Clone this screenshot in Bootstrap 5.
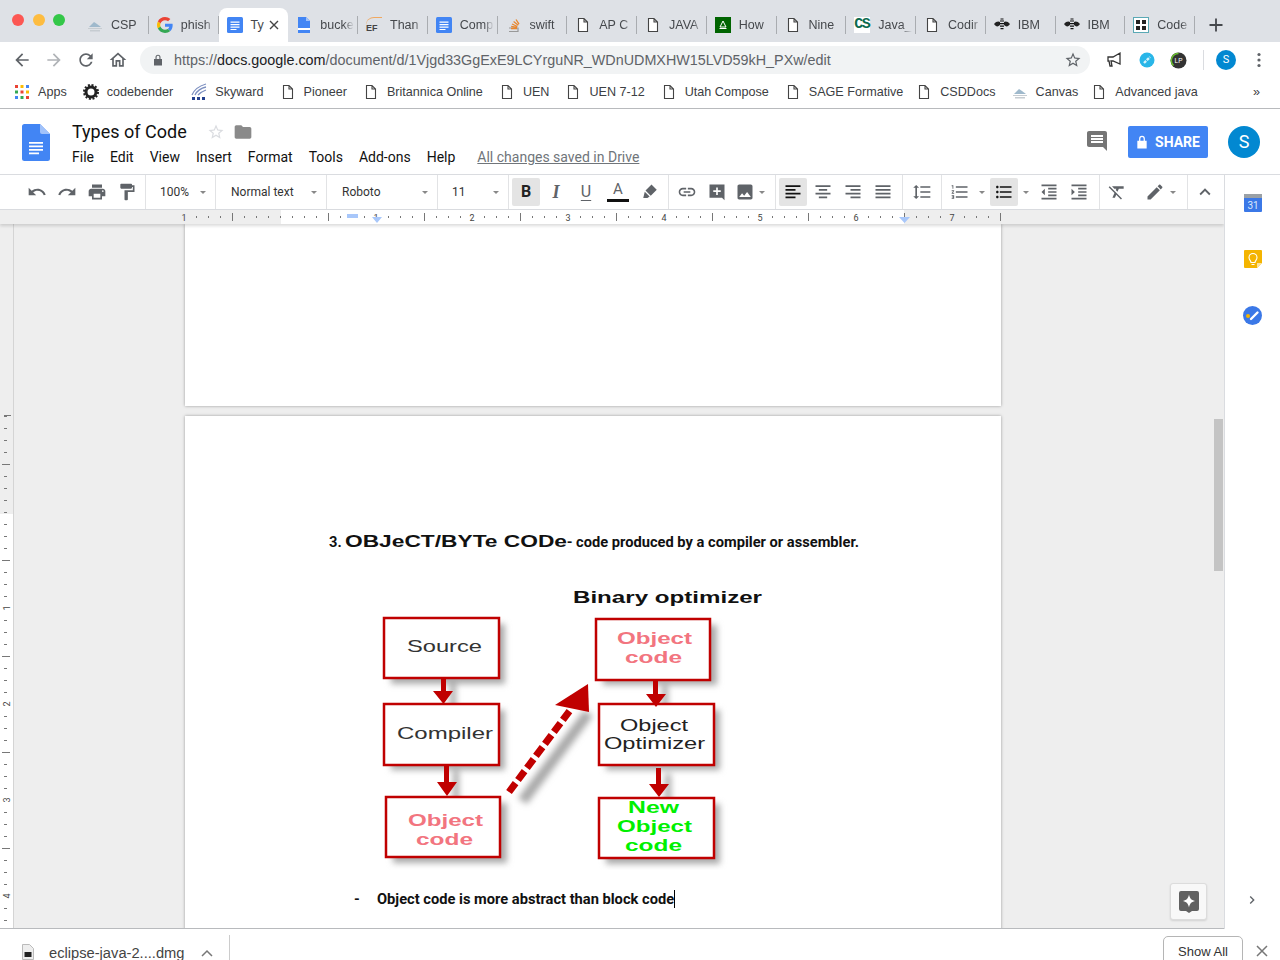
<!DOCTYPE html>
<html lang="en">

<head>
	<meta charset="utf-8">
	<title>Types of Code - Google Docs</title>
	<link href="https://cdn.jsdelivr.net/npm/bootstrap@5.3.3/dist/css/bootstrap.min.css" rel="stylesheet">
	<style>
		html, body { height: 960px; overflow: hidden; }
		body { font-family: Roboto, "Liberation Sans", sans-serif; color: #202124; background: #fff; }
		.app { height: 960px; width: 1280px; overflow: hidden; }
		svg { display: block; flex: none; }
		.ic { fill: #5f6368; }

		/* browser tabs */
		.tabstrip { height: 42px; background: #dee1e6; padding-left: 79px; flex: none; position: relative; }
		.lights { position: absolute; left: 12px; top: 14px; gap: 8.5px; }
		.light { width: 12px; height: 12px; border-radius: 50%; }
		.light-r { background: #fc5753; }
		.light-y { background: #fdbc40; }
		.light-g { background: #33c748; }
		.tabitem { width: 69.75px; height: 34px; margin-top: 8px; padding: 0 0 0 8px; font: 12.5px "Liberation Sans", sans-serif; color: #45484c; position: relative; white-space: nowrap; flex: none; }
		.tabitem::after { content: ""; position: absolute; right: 0; top: 8px; height: 18px; border-right: 1px solid #a9acb0; }
		.tabitem.active { background: #fff; border-radius: 8px 8px 0 0; }
		.tabitem.active::after { display: none; }
		.tablabel { width: 34px; margin-left: 8px; -webkit-mask-image: linear-gradient(90deg, #000 70%, transparent); mask-image: linear-gradient(90deg, #000 70%, transparent); }
		.tablabel-short { margin-left: 8px; width: 14px; }
		.tabx { margin-left: 4px; }
		.fav { width: 16px; height: 16px; flex: none; }
		.fav-ef { font: bold 9px "Liberation Sans", sans-serif; color: #444; line-height: 20px; border-top: 1px solid #f0a860; border-radius: 8px 0 0 0; }
		.fav-cs { font: bold 15px "Liberation Mono", monospace; color: #0c6b4e; line-height: 16px; letter-spacing: -1.500px; background: #fff; }
		.newtab { margin-left: 11px; margin-top: 15px; }

		/* address bar */
		.addrbar { height: 36px; flex: none; padding-left: 12px; }
		.navbtn { width: 32px; }
		.urlpill { width: 950px; height: 28px; margin-left: 12px; background: #f1f3f4; border-radius: 14px; padding: 0 8px 0 13px; font: 14.35px "Liberation Sans", sans-serif; color: #5f6368; }
		.urltext { margin-left: 11px; white-space: nowrap; }
		.urltext b { color: #202124; font-weight: 400; }
		.ext { margin-left: 16px; }
		.ext-gap { margin-left: 15px; }
		.vline { width: 1px; height: 20px; background: #dadce0; margin-left: 16px; }
		.acct { width: 20px; height: 20px; border-radius: 50%; background: #0288d1; color: #fff; font: 11px/20px Roboto, sans-serif; text-align: center; margin-left: 12px; }
		.dots { margin-left: 21px; }

		/* bookmarks */
		.bookbar { height: 31px; flex: none; padding: 0 0 2px 15px; border-bottom: 1px solid #b8babd; font: 12.6px "Liberation Sans", sans-serif; color: #3c4043; white-space: nowrap; }
		.bookitem { gap: 8px; margin-right: 16px; flex: none; }
		.bookitem.first { gap: 9px; }
		.bookitem.shift { margin-left: 2px; }
		.bookitem.tight { margin-right: 13px; }
		.morebooks { right: 20px; }

		/* docs header */
		.dochead { height: 66px; flex: none; padding: 15px 20px 0 22px; border-bottom: 1px solid #dadce0; }
		.docname { margin-left: 22px; margin-top: -2px; }
		.doctitle { font-size: 18px; line-height: 18px; color: #111; }
		.menus { font-size: 14px; line-height: 18px; gap: 16px; margin-top: 6px; color: #111; }
		.saved { color: #70757a; text-decoration: underline; margin-left: 6px; }
		.titlegap { margin-left: 20px; }
		.sharebtn { width: 80px; height: 32px; background: #4285f4; border-radius: 2px; color: #fff; font-size: 14px; font-weight: 700; gap: 7px; margin-left: 20px; margin-top: 2px; }
		.avatar { width: 32px; height: 32px; border-radius: 50%; background: #0288d1; color: #fff; font-size: 18px; line-height: 32px; text-align: center; margin-left: 20px; margin-top: 2px; }
		.cmt { margin-top: 5px; margin-right: -1px; }

		/* toolbar */
		.toolbar { height: 35px; flex: none; border-bottom: 1px solid #dadce0; font-size: 12px; color: #333; }
		.tgroup { height: 34px; border-right: 1px solid #e2e3e5; flex: none; }
		.g1 { width: 146px; padding-left: 22px; }
		.g2 { width: 70px; padding-left: 14px; }
		.g3, .g4 { width: 111px; padding-left: 15px; }
		.g5 { width: 71px; padding-left: 14px; }
		.g6 { width: 160px; padding-left: 2px; }
		.g7 { width: 107px; padding-left: 3px; }
		.g8 { width: 127px; padding-left: 2px; }
		.g9 { width: 39px; padding-left: 4px; }
		.g10 { width: 158px; padding-left: 3px; }
		.g11 { width: 88px; padding-left: 2px; }
		.g12 { width: 36px; padding-left: 2px; border-right: 0; }
		.tb { width: 30px; height: 28px; }
		.tb-on { background: #e4e4e4; border-radius: 2px; margin: 0 1px; width: 28px; }
		.tb-b { font-weight: 700; font-size: 16px; color: #222; }
		.tb-i { font: italic 700 18px "Liberation Serif", serif; color: #5f6368; }
		.tb-u { font-size: 16px; color: #5f6368; text-decoration: underline; text-underline-offset: 3px; }
		.tb-a { font-size: 15px; color: #5f6368; line-height: 15px; flex-direction: column; margin-left: 2px; }
		.tb-a i { display: block; width: 22px; height: 3px; background: #111; margin-top: 2px; }
		.tb-mark { margin-left: 2px; }
		.tb-img { margin-left: -2px; margin-right: -1px; }
		.caret { width: 0; height: 0; border-left: 3px solid transparent; border-right: 3px solid transparent; border-top: 3px solid #888; flex: none; }
		.gapc { margin-left: auto; margin-right: 9px; }
		.caret-s { margin: 0 4px; }
		.indent-gap { margin-left: 1px; }

		/* ruler and canvas */
		.ruler { height: 14px; flex: none; background: #eee; box-shadow: 0 2px 3px rgba(0, 0, 0, .14); position: relative; z-index: 1; }
		.rulernum { font: 9px Roboto, sans-serif; fill: #444; }
		.work { min-height: 0; background: #eee; }
		.vruler { width: 14px; flex: none; border-right: 1px solid #d4d4d4; }
		.canvas { width: 1199px; flex: none; overflow: hidden; position: relative; }
		.pagesheet { width: 816px; margin-left: 171px; background: #fff; box-shadow: 0 0 3px rgba(0, 0, 0, .35); }
		.sheet1 { height: 182px; }
		.sheet2 { height: 560px; margin-top: 10px; padding: 114px 0 0 144px; font-size: 14.67px; font-weight: 700; line-height: 24px; color: #111; }
		.headline { height: 24px; white-space: nowrap; }
		.wide-title { margin: 0 0 0 3px; }
		.diagram { margin: 31px 0 0 51px; }
		.diagram text { font-weight: 400; }
		.diagram text.heavy { font-weight: 700; }
		.bullet { margin: 17px 0 0 25px; }
		.bullet span:first-child { width: 23px; }
		.caretline { width: 1px; height: 18px; background: #000; }
		.exploreb { position: absolute; left: 1156px; top: 659px; width: 37px; height: 37px; background: #f8f8f8; border: 1px solid #dcdcdc; border-radius: 3px; box-shadow: 0 1px 2px rgba(0, 0, 0, .12); }
		.scrolltrack { width: 11px; flex: none; padding: 195px 0 0 1px; }
		.scrollthumb { width: 9px; height: 152px; background: #c4c4c4; }

		/* side panel */
		.sidepanel { width: 56px; flex: none; border-left: 1px solid #dadce0; background: #fff; height: 754px; padding-top: 19px; gap: 38px; position: relative; z-index: 2; }
		.sidechev { position: absolute; left: 19px; top: 717px; }

		/* downloads */
		.dlbar { height: 32px; flex: none; border-top: 1px solid #b8babd; background: #fff; font: 13px "Liberation Sans", sans-serif; color: #444; overflow: hidden; }
		.dlicon { margin: 15px 0 0 22px; }
		.dlname { margin-left: 15px; padding-top: 16px; width: 138px; white-space: nowrap; font-size: 14.7px; }
		.dlcaret { margin: 20px 0 0 14px; }
		.dlsep { width: 1px; height: 30px; background: #ccc; margin: 6px 0 0 16px; }
		.showall { width: 80px; height: 40px; margin: 7px 0 0 auto; border: 1px solid #b5b5b5; border-radius: 5px; text-align: center; padding-top: 7px; color: #333; }
		.dlclose { margin: 16px 12px 0 13px; }
	</style>
</head>

<body>
	<svg width="0" height="0" class="position-absolute">
		<symbol id="i-file" viewBox="0 0 16 16"><path d="M3.500 1.500h5.500l3.500 3.500v9.500h-9zM9 1.500v3.500h3.500" fill="#fff" stroke="#444" stroke-width="1.100"/></symbol>
		<symbol id="i-doc" viewBox="0 0 16 16"><rect width="16" height="16" rx="1.500" fill="#4285f4"/><path d="M3.500 4.500h9v1.200h-9zM3.500 7h9v1.200h-9zM3.500 9.500h9v1.200h-9zM3.500 12h6v1h-6z" fill="#fff"/></symbol>
		<symbol id="i-bucket" viewBox="0 0 16 16"><path d="M2 0h8l4 4v12H2z" fill="#4285f4"/><path d="M10 0l4 4h-4z" fill="#a1c2fa"/><path d="M2 11h12v2H2z" fill="#fff"/></symbol>
		<symbol id="i-bee" viewBox="0 0 16 16"><path d="M0 7c2-3 5-3 6-2v3C4 10 2 10 0 7zM16 7c-2-3-5-3-6-2v3c2 2 4 2 6-1z" fill="#222"/><path d="M6 3.500h4v1H6zM5.500 6h5v1.200h-5zM6 8.500h4v1.200H6zM6.500 11h3v1.200h-3zM6.500 1.500h3v1h-3z" fill="#111"/></symbol>
		<symbol id="i-cloud" viewBox="0 0 16 16"><path d="M2 10l5-5 3 2 4 3z" fill="#9fb9cc"/><path d="M1 11h14v1H1zM3 13h10v1.500H3z" fill="#c6ccd1"/></symbol>
		<symbol id="i-g" viewBox="0 0 48 48"><path fill="#EA4335" d="M24 9.500c3.540 0 6.710 1.220 9.210 3.600l6.850-6.850C35.900 2.380 30.470 0 24 0 14.620 0 6.510 5.380 2.560 13.220l7.980 6.190C12.430 13.720 17.740 9.500 24 9.500z"/><path fill="#4285F4" d="M46.980 24.550c0-1.570-.15-3.090-.38-4.550H24v9.020h12.940c-.58 2.960-2.260 5.480-4.780 7.180l7.730 6c4.510-4.180 7.090-10.360 7.090-17.650z"/><path fill="#FBBC05" d="M10.530 28.590c-.48-1.450-.76-2.990-.76-4.590s.27-3.140.76-4.590l-7.980-6.190C.92 16.460 0 20.120 0 24c0 3.880.92 7.540 2.560 10.780l7.970-6.190z"/><path fill="#34A853" d="M24 48c6.480 0 11.930-2.130 15.890-5.810l-7.730-6c-2.150 1.450-4.920 2.300-8.160 2.300-6.260 0-11.570-4.220-13.470-9.910l-7.980 6.190C6.510 42.620 14.620 48 24 48z"/></symbol>
		<symbol id="a-left" viewBox="0 0 24 24"><path d="M3 4h18v2H3zM3 8.500h12v2H3zM3 13h18v2H3zM3 17.500h12v2H3z"/></symbol>
		<symbol id="a-center" viewBox="0 0 24 24"><path d="M3 4h18v2H3zM7 8.500h10v2H7zM3 13h18v2H3zM7 17.500h10v2H7z"/></symbol>
		<symbol id="a-right" viewBox="0 0 24 24"><path d="M3 4h18v2H3zM9 8.500h12v2H9zM3 13h18v2H3zM9 17.500h12v2H9z"/></symbol>
		<symbol id="a-just" viewBox="0 0 24 24"><path d="M3 4h18v2H3zM3 8.500h18v2H3zM3 13h18v2H3zM3 17.500h18v2H3z"/></symbol>
		<pattern id="hticks" width="12" height="14" patternUnits="userSpaceOnUse"><rect x="4" y="6" width="1" height="2" fill="#777"/></pattern>
		<pattern id="vticks" width="14" height="12" patternUnits="userSpaceOnUse"><rect x="4" y="8" width="3" height="1" fill="#777"/></pattern>
		<filter id="soft" x="-30%" y="-30%" width="160%" height="160%"><feGaussianBlur stdDeviation="3"/></filter>
	</svg>

	<div class="app d-flex flex-column">
		<!-- browser tabs -->
		<div class="tabstrip d-flex">
			<div class="lights d-flex">
				<div class="light light-r"></div>
				<div class="light light-y"></div>
				<div class="light light-g"></div>
			</div>
			<div class="tabitem d-flex align-items-center"><svg class="fav"><use href="#i-cloud"/></svg><div class="tablabel">CSP</div></div>
			<div class="tabitem d-flex align-items-center"><svg class="fav"><use href="#i-g"/></svg><div class="tablabel">phish</div></div>
			<div class="tabitem active d-flex align-items-center"><svg class="fav"><use href="#i-doc"/></svg><div class="tablabel-short">Ty</div><svg class="tabx" width="10" height="10" viewBox="0 0 10 10"><path d="M1 1l8 8M9 1l-8 8" stroke="#444" stroke-width="1.400"/></svg></div>
			<div class="tabitem d-flex align-items-center"><svg class="fav"><use href="#i-bucket"/></svg><div class="tablabel">bucke</div></div>
			<div class="tabitem d-flex align-items-center"><div class="fav fav-ef">EF</div><div class="tablabel">Than</div></div>
			<div class="tabitem d-flex align-items-center"><svg class="fav"><use href="#i-doc"/></svg><div class="tablabel">Comp</div></div>
			<div class="tabitem d-flex align-items-center"><svg class="fav" viewBox="0 0 16 16"><path d="M3 11h9v3.500H3" fill="none" stroke="#999" stroke-width="1.200"/><path d="M5 11.500h6M5.200 9.300l5.800 1M6 7l5.400 2.500M7.600 4.500l4.700 3.700M10 2.500l3 4.700" stroke="#e8862e" stroke-width="1.300"/></svg><div class="tablabel">swift</div></div>
			<div class="tabitem d-flex align-items-center"><svg class="fav"><use href="#i-file"/></svg><div class="tablabel">AP C</div></div>
			<div class="tabitem d-flex align-items-center"><svg class="fav"><use href="#i-file"/></svg><div class="tablabel">JAVA</div></div>
			<div class="tabitem d-flex align-items-center"><svg class="fav" viewBox="0 0 16 16"><rect width="16" height="16" fill="#006400"/><path d="M8 4l-3 6h6zM4.500 11.500h7" fill="none" stroke="#fff" stroke-width="1"/></svg><div class="tablabel">How</div></div>
			<div class="tabitem d-flex align-items-center"><svg class="fav"><use href="#i-file"/></svg><div class="tablabel">Nine</div></div>
			<div class="tabitem d-flex align-items-center"><div class="fav fav-cs">CS</div><div class="tablabel">Java_</div></div>
			<div class="tabitem d-flex align-items-center"><svg class="fav"><use href="#i-file"/></svg><div class="tablabel">Codir</div></div>
			<div class="tabitem d-flex align-items-center"><svg class="fav"><use href="#i-bee"/></svg><div class="tablabel">IBM</div></div>
			<div class="tabitem d-flex align-items-center"><svg class="fav"><use href="#i-bee"/></svg><div class="tablabel">IBM</div></div>
			<div class="tabitem d-flex align-items-center"><svg class="fav" viewBox="0 0 16 16"><rect x=".5" y=".5" width="15" height="15" fill="#fff" stroke="#5aa9b5"/><path d="M3 3h4v4H3zM9 3h4v4H9zM3 9h4v4H3zM9 9h4v4H9z" fill="#222"/></svg><div class="tablabel">Code</div></div>
			<svg class="newtab" width="20" height="20" viewBox="0 0 20 20"><path d="M10 3.500v13M3.500 10h13" stroke="#45484c" stroke-width="1.800"/></svg>
		</div>

		<!-- address bar -->
		<div class="addrbar d-flex align-items-center">
			<div class="navbtn"><svg width="20" height="20" viewBox="0 0 24 24" class="ic"><path d="M20 11H7.830l5.590-5.590L12 4l-8 8 8 8 1.410-1.410L7.830 13H20v-2z"/></svg></div>
			<div class="navbtn"><svg width="20" height="20" viewBox="0 0 24 24" fill="#b0b3b7"><path d="M12 4l-1.410 1.410L16.170 11H4v2h12.170l-5.580 5.590L12 20l8-8z"/></svg></div>
			<div class="navbtn"><svg width="20" height="20" viewBox="0 0 24 24" class="ic"><path d="M17.650 6.350C16.200 4.900 14.210 4 12 4c-4.420 0-7.990 3.580-7.990 8s3.570 8 7.990 8c3.730 0 6.840-2.550 7.730-6h-2.080c-.82 2.330-3.040 4-5.650 4-3.310 0-6-2.690-6-6s2.690-6 6-6c1.660 0 3.140.69 4.220 1.780L13 11h7V4l-2.350 2.350z"/></svg></div>
			<div><svg width="20" height="20" viewBox="0 0 24 24" class="ic"><path d="M12 5.690l5 4.500V18h-2v-6H9v6H7v-7.810l5-4.500M12 3L2 12h3v8h6v-6h2v6h6v-8h3L12 3z"/></svg></div>
			<div class="urlpill d-flex align-items-center">
				<svg width="10" height="12" viewBox="0 0 10 12" fill="#5f6368"><path d="M2.500 5V3.200a2.500 2.500 0 015 0V5H9v6.500H1V5zM3.600 5h2.800V3.200a1.400 1.400 0 00-2.800 0z"/></svg>
				<span class="urltext">https://<b>docs.google.com</b>/document/d/1Vjgd33GgExE9LCYrguNR_WDnUDMXHW15LVD59kH_PXw/edit</span>
				<svg width="18" height="18" viewBox="0 0 24 24" class="ic ms-auto"><path d="M22 9.240l-7.190-.62L12 2 9.190 8.630 2 9.240l5.460 4.730L5.820 21 12 17.270 18.180 21l-1.630-7.030L22 9.240zM12 15.400l-3.760 2.270 1-4.280-3.320-2.880 4.380-.38L12 6.100l1.710 4.040 4.380.38-3.320 2.880 1 4.280L12 15.400z"/></svg>
			</div>
			<svg class="ext" width="18" height="18" viewBox="0 0 18 18"><path d="M2 6h5l7-4v11L7 10H5l1 5H4l-1-5H2z" fill="none" stroke="#333" stroke-width="1.300"/></svg>
			<svg class="ext-gap" width="16" height="16" viewBox="0 0 16 16"><circle cx="8" cy="8" r="7.500" fill="#29b6e8"/><path d="M5 11l6-6" stroke="#d5f2fb" stroke-width="2.400" stroke-dasharray="3 1"/></svg>
			<svg class="ext-gap" width="17" height="17" viewBox="0 0 17 17"><circle cx="8.500" cy="8.500" r="8" fill="#333"/><path d="M8.500 1.500a7 7 0 00-5 12" fill="none" stroke="#6abf2e" stroke-width="1.500"/><text x="8.500" y="11" text-anchor="middle" font-size="6.500" fill="#fff" font-family="Liberation Sans">LP</text></svg>
			<div class="vline"></div>
			<div class="acct">S</div>
			<svg class="dots" width="4" height="16" viewBox="0 0 4 16" fill="#5f6368"><circle cx="2" cy="2.500" r="1.600"/><circle cx="2" cy="8" r="1.600"/><circle cx="2" cy="13.500" r="1.600"/></svg>
		</div>

		<!-- bookmarks -->
		<div class="bookbar d-flex align-items-center position-relative">
			<div class="bookitem first d-flex align-items-center"><svg width="14" height="14" viewBox="0 0 14 14"><path d="M0 0h3v3H0z" fill="#ea4335"/><path d="M5.500 0h3v3h-3z" fill="#fbbc05"/><path d="M11 0h3v3h-3z" fill="#4285f4"/><path d="M0 5.500h3v3H0z" fill="#34a853"/><path d="M5.500 5.500h3v3h-3z" fill="#ea4335"/><path d="M11 5.500h3v3h-3z" fill="#fbbc05"/><path d="M0 11h3v3H0z" fill="#4285f4"/><path d="M5.500 11h3v3h-3z" fill="#34a853"/><path d="M11 11h3v3h-3z" fill="#ea4335"/></svg>Apps</div>
			<div class="bookitem d-flex align-items-center"><svg width="16" height="16" viewBox="0 0 16 16"><circle cx="8" cy="8" r="5" fill="none" stroke="#222" stroke-width="3"/><circle cx="8" cy="8" r="7" fill="none" stroke="#222" stroke-width="2" stroke-dasharray="2 1.700"/></svg>codebender</div>
			<div class="bookitem shift d-flex align-items-center"><svg width="16" height="18" viewBox="0 0 16 18"><path d="M1 12C3 7 8 3 15 1M4 12C6 8 10 5 15 4M7 12C9 10 12 8 15 7" fill="none" stroke="#7c8fc0" stroke-width="1.300"/><path d="M1 14h3v3H1zM6 14h3v3H6zM11 14h3v3h-3z" fill="#23408e"/></svg>Skyward</div>
			<div class="bookitem d-flex align-items-center"><svg width="16" height="16"><use href="#i-file"/></svg>Pioneer</div>
			<div class="bookitem d-flex align-items-center"><svg width="16" height="16"><use href="#i-file"/></svg>Britannica Online</div>
			<div class="bookitem d-flex align-items-center"><svg width="16" height="16"><use href="#i-file"/></svg>UEN</div>
			<div class="bookitem d-flex align-items-center"><svg width="16" height="16"><use href="#i-file"/></svg>UEN 7-12</div>
			<div class="bookitem d-flex align-items-center"><svg width="16" height="16"><use href="#i-file"/></svg>Utah Compose</div>
			<div class="bookitem tight d-flex align-items-center"><svg width="16" height="16"><use href="#i-file"/></svg>SAGE Formative</div>
			<div class="bookitem d-flex align-items-center"><svg width="16" height="16"><use href="#i-file"/></svg>CSDDocs</div>
			<div class="bookitem tight d-flex align-items-center"><svg width="16" height="16"><use href="#i-cloud"/></svg>Canvas</div>
			<div class="bookitem d-flex align-items-center"><svg width="16" height="16"><use href="#i-file"/></svg>Advanced java</div>
			<span class="position-absolute morebooks">»</span>
		</div>

		<!-- docs header -->
		<div class="dochead d-flex">
			<svg width="28" height="37" viewBox="0 0 28 37"><path d="M2.500 0H18l10 10v24.500a2.500 2.500 0 01-2.500 2.500h-23A2.500 2.500 0 010 34.500v-32A2.500 2.500 0 012.500 0z" fill="#4285f4"/><path d="M18 0l10 10H20a2 2 0 01-2-2z" fill="#a1c2fa"/><path d="M7 18h14v1.800H7zM7 21.500h14v1.800H7zM7 25h14v1.800H7zM7 28.500h10v1.800H7z" fill="#fff"/></svg>
			<div class="docname">
				<div class="d-flex align-items-center">
					<div class="doctitle">Types of Code</div>
					<svg class="titlegap" width="18" height="18" viewBox="0 0 24 24" fill="#dadce0"><path d="M22 9.240l-7.190-.62L12 2 9.190 8.630 2 9.240l5.460 4.730L5.820 21 12 17.270 18.180 21l-1.630-7.030L22 9.240zM12 15.400l-3.760 2.270 1-4.280-3.320-2.880 4.380-.38L12 6.100l1.710 4.040 4.380.38-3.320 2.880 1 4.280L12 15.400z"/></svg>
					<svg class="ms-2" width="20" height="20" viewBox="0 0 24 24" fill="#8a8a8a"><path d="M10 4H4c-1.100 0-1.990.9-1.990 2L2 18c0 1.100.9 2 2 2h16c1.100 0 2-.9 2-2V8c0-1.100-.9-2-2-2h-8l-2-2z"/></svg>
				</div>
				<div class="menus d-flex">
					<span>File</span><span>Edit</span><span>View</span><span>Insert</span><span>Format</span><span>Tools</span><span>Add-ons</span><span>Help</span><span class="saved">All changes saved in Drive</span>
				</div>
			</div>
			<svg class="cmt ms-auto" width="24" height="24" viewBox="0 0 24 24" fill="#757575"><path d="M21.990 4c0-1.100-.89-2-1.990-2H4c-1.100 0-2 .9-2 2v12c0 1.100.9 2 2 2h14l4 4-.01-18zM18 14H6v-2h12v2zm0-3H6V9h12v2zm0-3H6V6h12v2z"/></svg>
			<div class="sharebtn d-flex align-items-center justify-content-center"><svg width="12" height="14" viewBox="0 0 10 12" fill="#fff"><path d="M2.500 5V3.200a2.500 2.500 0 015 0V5H9v6.500H1V5zM3.600 5h2.800V3.200a1.400 1.400 0 00-2.800 0z"/></svg>SHARE</div>
			<div class="avatar">S</div>
		</div>

		<div class="d-flex flex-grow-1 work">
			<div class="d-flex flex-column">
				<!-- toolbar -->
				<div class="toolbar d-flex bg-white">
					<div class="tgroup g1 d-flex align-items-center">
						<div class="tb d-flex align-items-center justify-content-center"><svg width="20" height="20" viewBox="0 0 24 24" class="ic"><path d="M12.500 8c-2.650 0-5.050.99-6.900 2.600L2 7v9h9l-3.620-3.620c1.390-1.160 3.160-1.880 5.120-1.880 3.540 0 6.550 2.310 7.600 5.500l2.370-.78C21.080 11.030 17.150 8 12.500 8z"/></svg></div>
						<div class="tb d-flex align-items-center justify-content-center"><svg width="20" height="20" viewBox="0 0 24 24" class="ic"><path d="M18.400 10.600C16.550 8.990 14.150 8 11.500 8c-4.650 0-8.580 3.030-9.960 7.220L3.900 16c1.050-3.190 4.050-5.500 7.600-5.500 1.950 0 3.730.72 5.120 1.880L13 16h9V7l-3.600 3.600z"/></svg></div>
						<div class="tb d-flex align-items-center justify-content-center"><svg width="20" height="20" viewBox="0 0 24 24" class="ic"><path d="M19 8H5c-1.660 0-3 1.340-3 3v6h4v4h12v-4h4v-6c0-1.660-1.340-3-3-3zm-3 11H8v-5h8v5zm3-7c-.55 0-1-.45-1-1s.45-1 1-1 1 .45 1 1-.45 1-1 1zm-1-9H6v4h12V3z"/></svg></div>
						<div class="tb d-flex align-items-center justify-content-center"><svg width="20" height="20" viewBox="0 0 24 24" class="ic"><path d="M18 4V3c0-.55-.45-1-1-1H5c-.55 0-1 .45-1 1v4c0 .55.45 1 1 1h12c.55 0 1-.45 1-1V6h1v4H9v11c0 .55.45 1 1 1h2c.55 0 1-.45 1-1v-9h8V4h-3z"/></svg></div>
					</div>
					<div class="tgroup g2 d-flex align-items-center"><span>100%</span><div class="caret gapc"></div></div>
					<div class="tgroup g3 d-flex align-items-center"><span>Normal text</span><div class="caret gapc"></div></div>
					<div class="tgroup g4 d-flex align-items-center"><span>Roboto</span><div class="caret gapc"></div></div>
					<div class="tgroup g5 d-flex align-items-center"><span>11</span><div class="caret gapc"></div></div>
					<div class="tgroup g6 d-flex align-items-center">
						<div class="tb tb-on tb-b d-flex align-items-center justify-content-center">B</div>
						<div class="tb tb-i d-flex align-items-center justify-content-center">I</div>
						<div class="tb tb-u d-flex align-items-center justify-content-center">U</div>
						<div class="tb tb-a d-flex align-items-center justify-content-center">A<i></i></div>
						<div class="tb tb-mark d-flex align-items-center justify-content-center"><svg width="18" height="18" viewBox="0 0 24 24" class="ic"><path d="M14 2l7 7-8 8-7-7zM5 11.500l6.500 6.500-3 2H3z"/></svg></div>
					</div>
					<div class="tgroup g7 d-flex align-items-center">
						<div class="tb d-flex align-items-center justify-content-center"><svg width="20" height="20" viewBox="0 0 24 24" class="ic"><path d="M3.900 12c0-1.710 1.390-3.100 3.100-3.100h4V7H7c-2.760 0-5 2.240-5 5s2.240 5 5 5h4v-1.900H7c-1.710 0-3.100-1.390-3.100-3.100zM8 13h8v-2H8v2zm9-6h-4v1.900h4c1.710 0 3.100 1.390 3.100 3.100s-1.390 3.100-3.100 3.100h-4V17h4c2.760 0 5-2.240 5-5s-2.240-5-5-5z"/></svg></div>
						<div class="tb d-flex align-items-center justify-content-center"><svg width="20" height="20" viewBox="0 0 24 24" class="ic"><path d="M3 3h18v19l-3-3H3zM11 6.500v3.500H7.500v2H11v3.500h2V12h3.500v-2H13V6.500z" fill-rule="evenodd"/></svg></div>
						<div class="tb tb-img d-flex align-items-center justify-content-center"><svg width="20" height="20" viewBox="0 0 24 24" class="ic"><path d="M21 19V5c0-1.100-.9-2-2-2H5c-1.100 0-2 .9-2 2v14c0 1.100.9 2 2 2h14c1.100 0 2-.9 2-2zM8.500 13.500l2.500 3.010L14.500 12l4.500 6H5l3.500-4.500z"/></svg></div>
						<div class="caret"></div>
					</div>
					<div class="tgroup g8 d-flex align-items-center">
						<div class="tb tb-on d-flex align-items-center justify-content-center"><svg width="20" height="20" fill="#111"><use href="#a-left"/></svg></div>
						<div class="tb d-flex align-items-center justify-content-center"><svg width="20" height="20" class="ic"><use href="#a-center"/></svg></div>
						<div class="tb d-flex align-items-center justify-content-center"><svg width="20" height="20" class="ic"><use href="#a-right"/></svg></div>
						<div class="tb d-flex align-items-center justify-content-center"><svg width="20" height="20" class="ic"><use href="#a-just"/></svg></div>
					</div>
					<div class="tgroup g9 d-flex align-items-center">
						<div class="tb d-flex align-items-center justify-content-center"><svg width="20" height="20" viewBox="0 0 24 24" class="ic"><path d="M6 7h2.500L5 3.500 1.500 7H4v10H1.500L5 20.500 8.500 17H6V7zm4-2v2h12V5H10zm0 14h12v-2H10v2zm0-6h12v-2H10v2z"/></svg></div>
					</div>
					<div class="tgroup g10 d-flex align-items-center">
						<div class="tb d-flex align-items-center justify-content-center"><svg width="20" height="20" viewBox="0 0 24 24" class="ic"><path d="M2 17h2v.5H3v1h1v.5H2v1h3v-4H2v1zm1-9h1V4H2v1h1v3zm-1 3h1.800L2 13.100v.9h3v-1H3.200L5 10.900V10H2v1zm5-6v2h14V5H7zm0 14h14v-2H7v2zm0-6h14v-2H7v2z"/></svg></div>
						<div class="caret caret-s"></div>
						<div class="tb tb-on d-flex align-items-center justify-content-center"><svg width="20" height="20" viewBox="0 0 24 24" fill="#111"><path d="M4 10.500c-.83 0-1.500.67-1.500 1.500s.67 1.500 1.500 1.500 1.500-.67 1.500-1.500-.67-1.500-1.500-1.500zm0-6c-.83 0-1.500.67-1.500 1.500S3.170 7.500 4 7.500 5.500 6.830 5.500 6 4.830 4.500 4 4.500zm0 12c-.83 0-1.500.68-1.500 1.500s.68 1.500 1.500 1.500 1.500-.68 1.500-1.500-.67-1.500-1.500-1.500zM7 19h14v-2H7v2zm0-6h14v-2H7v2zm0-8v2h14V5H7z"/></svg></div>
						<div class="caret caret-s"></div>
						<div class="tb indent-gap d-flex align-items-center justify-content-center"><svg width="20" height="20" viewBox="0 0 24 24" class="ic"><path d="M11 17h10v-2H11v2zm-8-5l4 4V8l-4 4zm0 9h18v-2H3v2zM3 3v2h18V3H3zm8 6h10V7H11v2zm0 4h10v-2H11v2z"/></svg></div>
						<div class="tb d-flex align-items-center justify-content-center"><svg width="20" height="20" viewBox="0 0 24 24" class="ic"><path d="M3 21h18v-2H3v2zM3 8v8l4-4-4-4zm8 9h10v-2H11v2zM3 3v2h18V3H3zm8 6h10V7H11v2zm0 4h10v-2H11v2z"/></svg></div>
					</div>
					<div class="tgroup g11 d-flex align-items-center">
						<div class="tb d-flex align-items-center justify-content-center"><svg width="20" height="20" viewBox="0 0 24 24" class="ic"><path d="M3.270 5L2 6.270l6.970 6.970L6.500 19h3l1.570-3.660L16.730 21 18 19.730 3.550 5.270 3.270 5zM6 5v.18L8.820 8h2.400l-.72 1.680 2.100 2.100L14.210 8H20V5H6z"/></svg></div>
						<div class="tb ms-2 d-flex align-items-center justify-content-center"><svg width="20" height="20" viewBox="0 0 24 24" class="ic"><path d="M3 17.250V21h3.750L17.810 9.940l-3.750-3.750L3 17.250zM20.710 7.040c.39-.39.39-1.020 0-1.410l-2.340-2.340c-.39-.39-1.020-.39-1.410 0l-1.830 1.830 3.750 3.750 1.830-1.830z"/></svg></div>
						<div class="caret"></div>
					</div>
					<div class="tgroup g12 d-flex align-items-center">
						<div class="tb d-flex align-items-center justify-content-center"><svg width="22" height="22" viewBox="0 0 24 24" class="ic"><path d="M12 8l-6 6 1.410 1.410L12 10.830l4.590 4.580L18 14z"/></svg></div>
					</div>
				</div>

				<!-- horizontal ruler -->
				<div class="ruler">
					<svg width="1224" height="14" viewBox="0 0 1224 14">
						<rect x="281" width="623" height="14" fill="#fff"/>
						<rect x="184" width="816" height="14" fill="url(#hticks)"/>
						<path d="M232 3h1v8h-1zM328 3h1v8h-1zM424 3h1v8h-1zM520 3h1v8h-1zM616 3h1v8h-1zM712 3h1v8h-1zM808 3h1v8h-1zM904 3h1v8h-1zM1000 3h1v8h-1z" fill="#777"/>
						<g class="rulernum" text-anchor="middle">
							<rect x="180" width="8" height="14" fill="#eee"/><text x="184" y="11">1</text>
							<rect x="468" width="8" height="14" fill="#fff"/><text x="472" y="11">2</text>
							<rect x="564" width="8" height="14" fill="#fff"/><text x="568" y="11">3</text>
							<rect x="660" width="8" height="14" fill="#fff"/><text x="664" y="11">4</text>
							<rect x="756" width="8" height="14" fill="#fff"/><text x="760" y="11">5</text>
							<rect x="852" width="8" height="14" fill="#fff"/><text x="856" y="11">6</text>
							<rect x="948" width="8" height="14" fill="#eee"/><text x="952" y="11">7</text>
							<rect x="372" width="8" height="14" fill="#fff"/><text x="376" y="11">1</text>
						</g>
						<path d="M347 4h11v4h-11zM372 7h10l-5 6zM899 7h11l-5.500 6z" fill="#a8c7fa"/>
					</svg>
				</div>

				<div class="d-flex flex-grow-1 overflow-hidden">
					<!-- vertical ruler -->
					<div class="vruler">
						<svg width="13" height="704" viewBox="0 224 13 704">
							<rect x="0" y="514" width="13" height="414" fill="#fff"/>
							<rect x="0" y="414" width="13" height="514" fill="url(#vticks)"/>
							<path d="M2 464h8v1H2zM2 560h8v1H2zM2 656h8v1H2zM2 752h8v1H2zM2 848h8v1H2z" fill="#777"/>
							<path d="M4 415h7v1H4z" fill="#777"/>
							<g class="rulernum" text-anchor="middle">
								<rect x="2" y="603" width="9" height="10" fill="#fff"/><text transform="translate(9.500 608) rotate(-90)">1</text>
								<rect x="2" y="699" width="9" height="10" fill="#fff"/><text transform="translate(9.500 704) rotate(-90)">2</text>
								<rect x="2" y="795" width="9" height="10" fill="#fff"/><text transform="translate(9.500 800) rotate(-90)">3</text>
								<rect x="2" y="891" width="9" height="10" fill="#fff"/><text transform="translate(9.500 896) rotate(-90)">4</text>
							</g>
						</svg>
					</div>

					<!-- document canvas -->
					<div class="canvas">
						<div class="pagesheet sheet1"></div>
						<div class="pagesheet sheet2">
							<div class="headline d-flex align-items-center">
								<span>3.</span>
								<svg class="wide-title" width="222" height="24" viewBox="0 0 222 24"><text x="0" y="17" textLength="222" lengthAdjust="spacingAndGlyphs" font-family="Liberation Sans" font-weight="700" font-size="16" fill="#111">OBJeCT/BYTe CODe</text></svg>
								<span>- code produced by a compiler or assembler.</span>
							</div>
							<svg class="diagram" width="400" height="285" viewBox="380 585 400 285">
								<g fill="#aaa" filter="url(#soft)">
									<path d="M391 624h114v60h-114zM391 710h114v60h-114zM393 803h114v60h-114zM603 625h114v60h-114zM606 710h114v60h-114zM606 804h114v60h-114z"/>
									<path d="M518 798l66-88 9 6-66 88zM450 684h6v26h-6zM453 771h6v32h-6zM662 686h6v26h-6zM665 774h6v30h-6z"/>
								</g>
								<g fill="#fff" stroke="#c00000" stroke-width="2.500">
									<rect x="384" y="618" width="115" height="60"/>
									<rect x="384" y="704" width="115" height="61"/>
									<rect x="386" y="797" width="114" height="60"/>
									<rect x="596" y="619" width="114" height="61"/>
									<rect x="599" y="704" width="115" height="61"/>
									<rect x="599" y="798" width="115" height="60"/>
								</g>
								<g fill="#c00000">
									<path d="M441 678h5v13h7l-9.500 13-10.500-13h8zM444 765h5v17h8l-10 14-10-14h7zM653 680h5v14h8l-10 13-10-13h7zM656 768h5v16h8l-10 13-10-13h7z"/>
									<path d="M588 684l-33 21 34 7z"/>
								</g>
								<path d="M509 792l62-83" stroke="#c00000" stroke-width="7" stroke-dasharray="11 4" fill="none"/>
								<g font-family="Liberation Sans">
									<text class="heavy" x="573" y="603" font-size="17" fill="#111" textLength="189" lengthAdjust="spacingAndGlyphs">Binary optimizer</text>
									<text x="407" y="652" font-size="17" fill="#333" textLength="75" lengthAdjust="spacingAndGlyphs">Source</text>
									<text x="397" y="739" font-size="17" fill="#333" textLength="96" lengthAdjust="spacingAndGlyphs">Compiler</text>
									<text class="heavy" x="408" y="826" font-size="17" fill="#f2757f" textLength="75" lengthAdjust="spacingAndGlyphs">Object</text>
									<text class="heavy" x="416" y="845" font-size="17" fill="#f2757f" textLength="57" lengthAdjust="spacingAndGlyphs">code</text>
									<text class="heavy" x="617" y="644" font-size="17" fill="#f2757f" textLength="75" lengthAdjust="spacingAndGlyphs">Object</text>
									<text class="heavy" x="625" y="663" font-size="17" fill="#f2757f" textLength="57" lengthAdjust="spacingAndGlyphs">code</text>
									<text x="620" y="731" font-size="17" fill="#222" textLength="68" lengthAdjust="spacingAndGlyphs">Object</text>
									<text x="604" y="749" font-size="17" fill="#222" textLength="101" lengthAdjust="spacingAndGlyphs">Optimizer</text>
									<text class="heavy" x="628" y="813" font-size="17" fill="#00f000" textLength="51" lengthAdjust="spacingAndGlyphs">New</text>
									<text class="heavy" x="617" y="832" font-size="17" fill="#00f000" textLength="75" lengthAdjust="spacingAndGlyphs">Object</text>
									<text class="heavy" x="625" y="851" font-size="17" fill="#00f000" textLength="57" lengthAdjust="spacingAndGlyphs">code</text>
								</g>
							</svg>
							<div class="bullet d-flex align-items-center">
								<span>-</span><span>Object code is more abstract than block code</span><span class="caretline"></span>
							</div>
						</div>
						<div class="exploreb d-flex align-items-center justify-content-center">
							<svg width="20" height="22" viewBox="0 0 20 22"><path d="M2 0h16a2 2 0 012 2v16a2 2 0 01-2 2h-5l-3 2-3-2H2a2 2 0 01-2-2V2a2 2 0 012-2z" fill="#616161"/><path d="M10 3.500c.7 3.500 2 5.500 6 6.500-4 1-5.300 3-6 6.500-.7-3.500-2-5.500-6-6.500 4-1 5.300-3 6-6.500z" fill="#fff"/></svg>
						</div>
					</div>
					<div class="scrolltrack"><div class="scrollthumb"></div></div>
				</div>
			</div>

			<!-- side panel -->
			<div class="sidepanel d-flex flex-column align-items-center">
				<svg width="18" height="18" viewBox="0 0 18 18"><rect y="1" width="18" height="17" rx="1" fill="#3b78e7"/><rect y="0" width="18" height="4" fill="#9aa0a6"/><text x="9" y="14.500" text-anchor="middle" font-size="10" fill="#dce8fc" font-family="Roboto">31</text></svg>
				<svg width="18" height="18" viewBox="0 0 18 18"><path d="M1 0h16a1 1 0 011 1v12l-5 5H1a1 1 0 01-1-1V1a1 1 0 011-1z" fill="#f4b400"/><path d="M18 13h-5v5z" fill="#fbe29c"/><path d="M7 12.500c0-2-2-2.500-2-5a4 4 0 018 0c0 2.500-2 3-2 5zM7.500 14.500h3" fill="none" stroke="#fff" stroke-width="1.100"/></svg>
				<svg width="19" height="19" viewBox="0 0 19 19"><circle cx="9.500" cy="9.500" r="9.500" fill="#3b78e7"/><circle cx="5" cy="10" r="2" fill="#f4b400"/><path d="M8 13l6.500-6.500" stroke="#fff" stroke-width="2.400" stroke-linecap="round"/></svg>
				<svg class="sidechev" width="16" height="16" viewBox="0 0 24 24" fill="#5f6368"><path d="M10 6L8.590 7.410 13.170 12l-4.580 4.590L10 18l6-6z"/></svg>
			</div>
		</div>

		<!-- downloads -->
		<div class="dlbar d-flex">
			<svg class="dlicon" width="12" height="16" viewBox="0 0 12 16"><path d="M.5.5h7l4 4v11H.5z" fill="#eee" stroke="#bbb"/><path d="M2.500 8h7v5h-7z" fill="#222"/></svg>
			<div class="dlname">eclipse-java-2....dmg</div>
			<svg class="dlcaret" width="12" height="8" viewBox="0 0 12 8"><path d="M1 7l5-5 5 5" fill="none" stroke="#777" stroke-width="1.500"/></svg>
			<div class="dlsep"></div>
			<div class="showall">Show All</div>
			<svg class="dlclose" width="12" height="12" viewBox="0 0 12 12"><path d="M1 1l10 10M11 1L1 11" stroke="#777" stroke-width="1.500"/></svg>
		</div>
	</div>

	<script src="https://cdn.jsdelivr.net/npm/bootstrap@5.3.3/dist/js/bootstrap.bundle.min.js"></script>
</body>

</html>
